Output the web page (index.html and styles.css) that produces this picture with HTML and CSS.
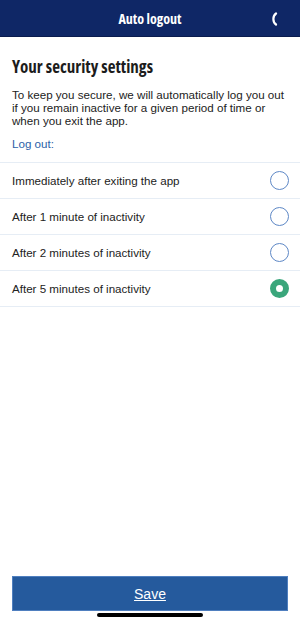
FILE: index.html
```html
<!DOCTYPE html>
<html>
<head>
<meta charset="utf-8">
<link rel="stylesheet" href="styles.css">
</head>
<body>
<div class="app">
  <header class="topbar">
    <span class="title">Auto logout</span>
    <svg class="back" width="8" height="14" viewBox="0 0 8 14"><path d="M6 1.5 C2.5 4 2.5 10 6 12.5" fill="none" stroke="#fff" stroke-width="2.2" stroke-linecap="round"/></svg>
  </header>
  <main class="content">
    <h1 class="heading">Your security settings</h1>
    <p class="intro">To keep you secure, we will automatically log you out if you remain inactive for a given period of time or when you exit the app.</p>
    <div class="label">Log out:</div>
    <ul class="options">
      <li class="option"><span>Immediately after exiting the app</span><span class="radio"></span></li>
      <li class="option"><span>After 1 minute of inactivity</span><span class="radio"></span></li>
      <li class="option"><span>After 2 minutes of inactivity</span><span class="radio"></span></li>
      <li class="option"><span>After 5 minutes of inactivity</span><span class="radio checked"></span></li>
    </ul>
  </main>
  <div class="footer">
    <button class="save">Save</button>
  </div>
  <div class="home"></div>
</div>
</body>
</html>
```
FILE: styles.css
```css
* { box-sizing: border-box; }
html, body { margin: 0; padding: 0; background: #fff; }
.app {
  position: relative;
  width: 300px;
  height: 623px;
  display: flex;
  flex-direction: column;
  font-family: "Liberation Sans", Arial, sans-serif;
  color: #222;
}
.topbar {
  height: 37px;
  background: #0f2766;
  border-bottom: 1px solid #0a1c4e;
  position: relative;
  display: flex;
  align-items: center;
  justify-content: center;
  flex-shrink: 0;
}
.title {
  font-family: "Open Sans", "DejaVu Sans Condensed", sans-serif;
  font-stretch: 75%;
  font-weight: 700;
  font-size: 14px;
  color: #fff;
}
.back {
  position: absolute;
  right: 22px;
  top: 12px;
}
.content { flex: 1; }
.heading {
  font-family: "Open Sans", "DejaVu Sans Condensed", sans-serif;
  font-stretch: 75%;
  font-weight: 700;
  font-size: 17px;
  color: #1c1c1c;
  margin: 20px 12px 0;
  line-height: 20px;
}
.intro {
  margin: 11px 12px 0;
  font-size: 11.6px;
  line-height: 13px;
  color: #222;
}
.label {
  margin: 10px 12px 0;
  font-size: 11.6px;
  line-height: 14px;
  color: #2c5fa8;
}
.options {
  list-style: none;
  margin: 11px 0 0;
  padding: 0;
  border-top: 1px solid #e6edf5;
}
.option {
  height: 36px;
  border-bottom: 1px solid #e6edf5;
  display: flex;
  align-items: center;
  justify-content: space-between;
  padding: 0 11px 0 12px;
  font-size: 11.6px;
  color: #222;
}
.radio {
  width: 19px;
  height: 19px;
  border-radius: 50%;
  border: 1.5px solid #5e88c6;
  flex-shrink: 0;
}
.radio.checked {
  border: 6.5px solid #3aa67b;
  background: #fff;
}
.footer {
  padding: 0 12px 12px;
}
.save {
  display: block;
  width: 100%;
  height: 35px;
  background: #255a9d;
  border: 1px solid #4f7fbf;
  color: #fff;
  font-family: "Liberation Sans", Arial, sans-serif;
  font-size: 14px;
  text-decoration: underline;
  padding: 0;
}
.home {
  position: absolute;
  left: 97px;
  bottom: 6px;
  width: 106px;
  height: 4px;
  border-radius: 2px;
  background: #000;
}
```
